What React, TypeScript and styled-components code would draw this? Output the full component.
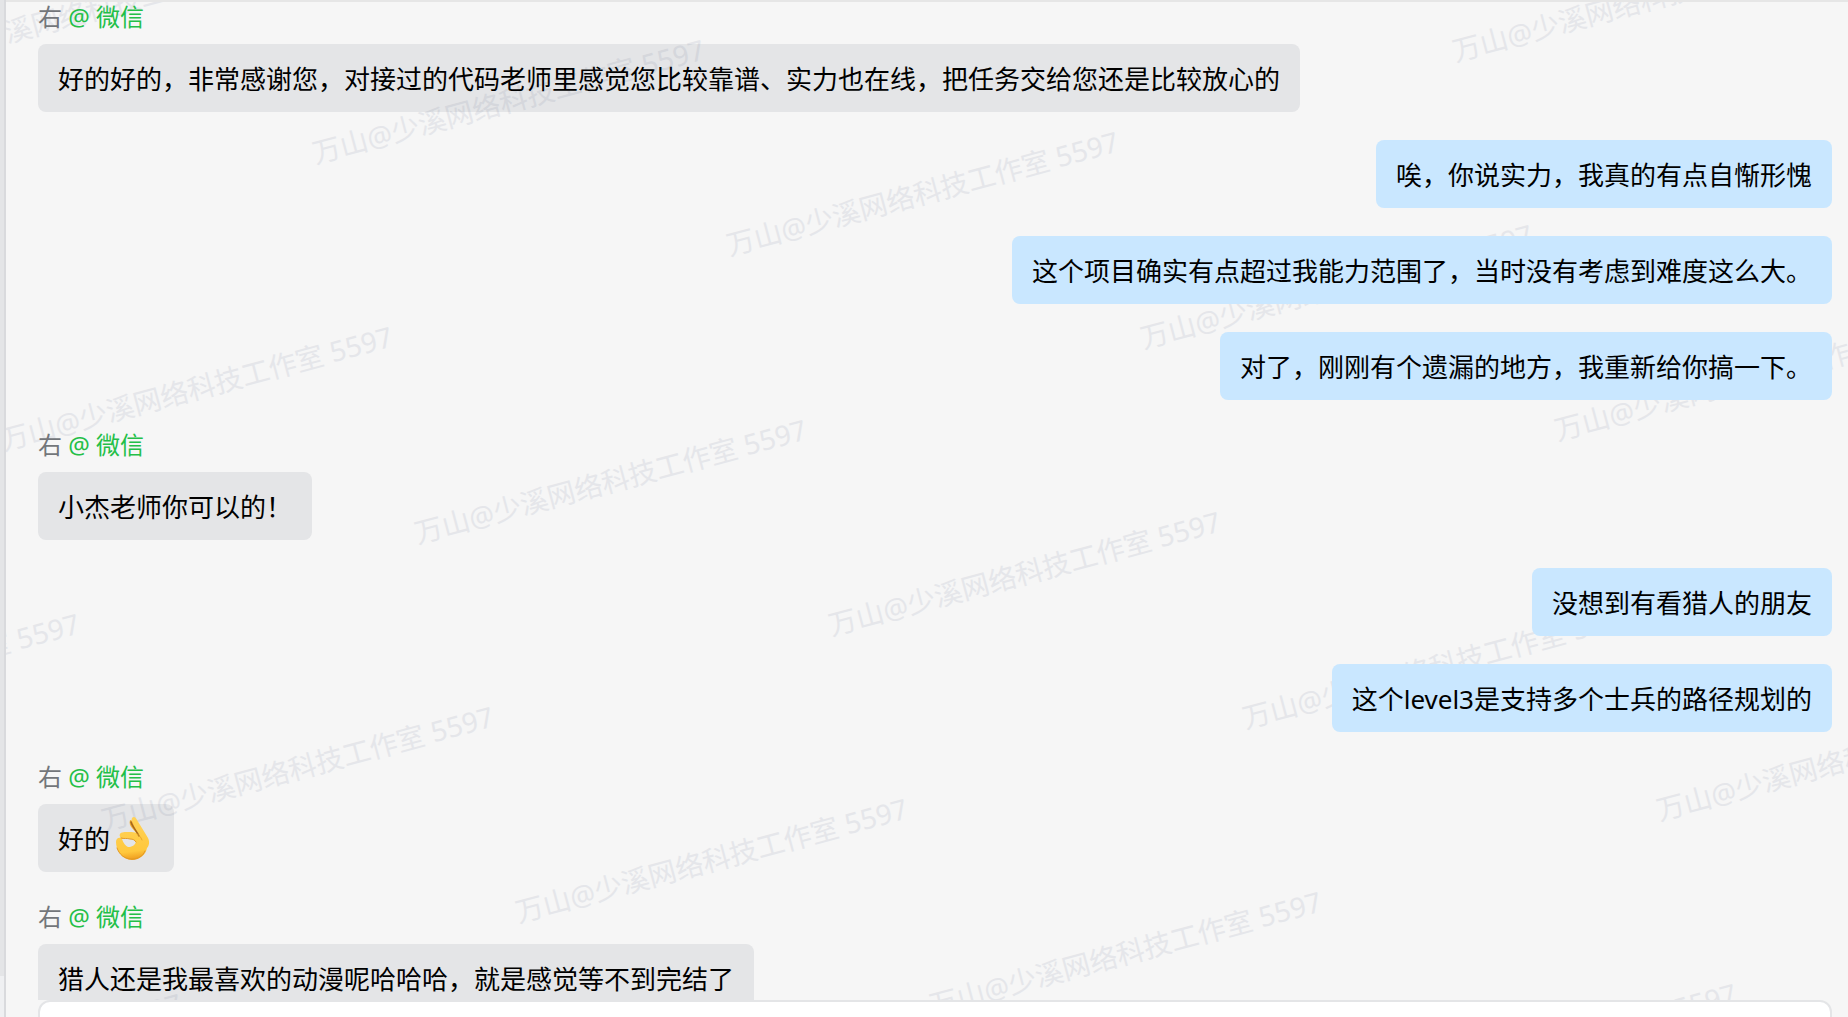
import React from "react";
import styled, { createGlobalStyle } from "styled-components";

const GlobalStyle = createGlobalStyle`
  * { box-sizing: border-box; }
  body {
    margin: 0;
    background: #f6f6f6;
    font-family: "Noto Sans", "Noto Sans CJK SC", sans-serif;
  }
`;

const Page = styled.div`
  display: flex;
  height: 100vh;
  overflow: hidden;
`;

const Rail = styled.aside`
  flex: none;
  display: flex;
  flex-direction: column;
  width: 6px;
  background: #eff0f2;
  border-right: 2px solid #d9dadd;
`;

const RailActive = styled.div`
  flex: 1;
  margin-bottom: 41px;
  background: #e4e5e7;
`;

const Chat = styled.main`
  position: relative;
  flex: 1;
  min-width: 0;
  display: flex;
  flex-direction: column;
  overflow: hidden;

  &::before {
    content: "";
    position: absolute;
    top: 0;
    left: 0;
    right: 0;
    height: 2px;
    background: #e6e6e6;
    z-index: 1;
  }
`;

const Watermarks = styled.div`
  position: absolute;
  inset: 0;
  overflow: hidden;
  pointer-events: none;
  user-select: none;
`;

const Mark = styled.span`
  position: absolute;
  transform-origin: 0 50%;
  transform: rotate(-15deg);
  font-size: 28px;
  line-height: 32px;
  color: #e5e6ea;
  white-space: nowrap;
`;

const Messages = styled.div`
  position: relative;
  flex: 1;
  min-height: 0;
  display: flex;
  flex-direction: column;
  gap: 28px;
  padding: 0 16px 0 32px;
  overflow: hidden;
`;

const Message = styled.article<{ $own?: boolean }>`
  flex: none;
  display: flex;
  flex-direction: column;
  align-items: ${(p) => (p.$own ? "flex-end" : "flex-start")};
`;

const Sender = styled.header`
  margin-bottom: 10px;
  font-size: 24px;
  line-height: 34px;
  color: #73767a;
`;

const Channel = styled.span`
  color: #24bf48;
`;

const Bubble = styled.p<{ $own?: boolean }>`
  display: flex;
  align-items: center;
  margin: 0;
  padding: 17px 20px 15px;
  border-radius: 8px;
  font-size: 26px;
  line-height: 36px;
  color: #000;
  background: ${(p) => (p.$own ? "#c9e7ff" : "rgba(21, 34, 59, 0.08)")};
`;

const Emoji = styled.svg`
  width: 44px;
  height: 44px;
  margin: -4px 0;
`;

const Composer = styled.footer`
  position: relative;
  flex: none;
  height: 17px;
  padding: 0 16px 0 32px;
`;

const Input = styled.textarea`
  display: block;
  width: 100%;
  height: 80px;
  padding: 16px;
  border: 2px solid #e4e5e7;
  border-radius: 12px;
  background: #fff;
  font: inherit;
  resize: none;
  outline: none;
`;

const OkHand = () => (
  <Emoji viewBox="0 0 44 44" role="img" aria-label="OK">
    <defs>
      <linearGradient id="palm" x1="0.4" y1="0" x2="0.5" y2="1">
        <stop offset="0" stopColor="#ffd35a" />
        <stop offset="0.8" stopColor="#ffc83d" />
        <stop offset="1" stopColor="#ee9a1c" />
      </linearGradient>
    </defs>
    <path d="M20 3c-1 3 0 6 2 8l7 8 3-3-7-9c-2-2-3-4-5-4z" fill="#f2b032" />
    <path
      d="M24 0c-2 0-3 2-2 4l5 12c-2-1-5-1-8-1-4 0-8 0-9 2-1 1 0 3 1 4-3-1-5 1-5 4 0 8 6 18 16 18 8 0 14-6 15-12 2-2 3-6 1-10l-3-5L27 3c-1-2-2-3-3-3zM12 22c2 0 5-1 8 0 3 0 5 1 6 3-1 3-4 5-8 5-2-1-5-4-6-8z"
      fill="url(#palm)"
      fillRule="evenodd"
    />
    <path d="M21 5c1 4 5 8 8 14" fill="none" stroke="#a8681a" strokeWidth="1.6" strokeLinecap="round" />
    <path d="M11 21c3 1 6 0 9 1 3 0 5 1 6 3M7 31c2 6 7 11 15 11 6 0 11-3 13-8" fill="none" stroke="#e39a25" strokeWidth="1" strokeLinecap="round" />
    <path d="M27 17c2 1 4 3 5 6" fill="none" stroke="#e8a52c" strokeWidth="1" strokeLinecap="round" />
  </Emoji>
);

const MARK_TEXT = "万山@少溪网络科技工作室 5597";
const ANGLE = (15 * Math.PI) / 180;
const COLUMN = 376;
const ROW = 393;
const START = { x: 307, y: 153 };

const marks = [-2, -1, 0, 1, 2, 3, 4, 5]
  .flatMap((column) =>
    [-3, -2, -1, 0, 1, 2, 3].map((row) => {
      const along = column * COLUMN;
      const down = row * ROW + (column * ROW) / 2;
      return {
        left: Math.round(START.x + along * Math.cos(ANGLE) + down * Math.sin(ANGLE)),
        top: Math.round(START.y - 16 - along * Math.sin(ANGLE) + down * Math.cos(ANGLE)),
      };
    })
  )
  .filter((m) => m.left > -380 && m.left < 1920 && m.top > -16 && m.top < 1100);

type Item = { own?: boolean; text: string; ok?: boolean };

const items: Item[] = [
  { text: "好的好的，非常感谢您，对接过的代码老师里感觉您比较靠谱、实力也在线，把任务交给您还是比较放心的" },
  { own: true, text: "唉，你说实力，我真的有点自惭形愧" },
  { own: true, text: "这个项目确实有点超过我能力范围了，当时没有考虑到难度这么大。" },
  { own: true, text: "对了，刚刚有个遗漏的地方，我重新给你搞一下。" },
  { text: "小杰老师你可以的！" },
  { own: true, text: "没想到有看猎人的朋友" },
  { own: true, text: "这个level3是支持多个士兵的路径规划的" },
  { text: "好的", ok: true },
  { text: "猎人还是我最喜欢的动漫呢哈哈哈，就是感觉等不到完结了" },
];

export default function App() {
  return (
    <Page lang="zh-CN">
      <GlobalStyle />
      <Rail>
        <RailActive />
      </Rail>
      <Chat>
        <Watermarks aria-hidden="true">
          {marks.map((m) => (
            <Mark key={`${m.left},${m.top}`} style={m}>
              {MARK_TEXT}
            </Mark>
          ))}
        </Watermarks>
        <Messages>
          {items.map((item) => (
            <Message key={item.text} $own={item.own}>
              {!item.own && (
                <Sender>
                  右 <Channel>@ 微信</Channel>
                </Sender>
              )}
              <Bubble $own={item.own}>
                {item.text}
                {item.ok && <OkHand />}
              </Bubble>
            </Message>
          ))}
        </Messages>
        <Composer>
          <Input aria-label="消息" />
        </Composer>
      </Chat>
    </Page>
  );
}
